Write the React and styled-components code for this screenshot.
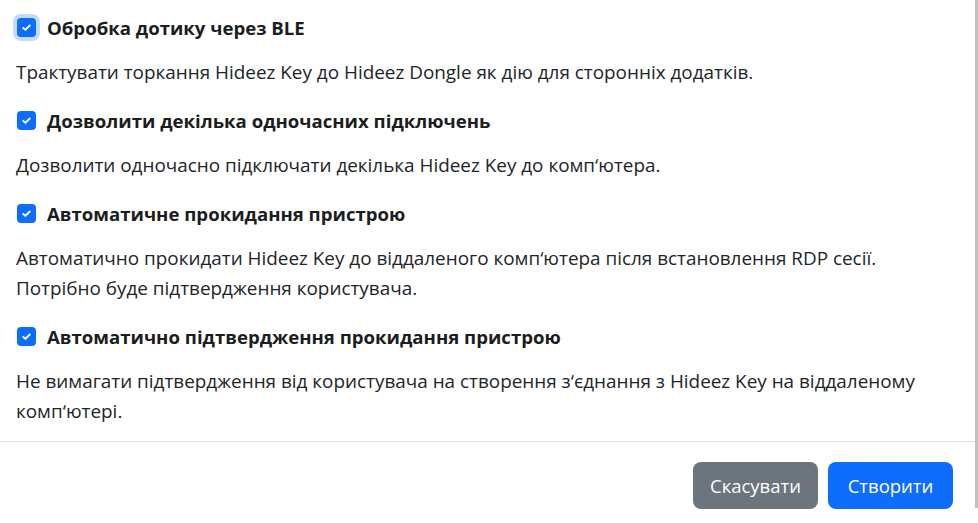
import React from 'react'
import styled, { createGlobalStyle } from 'styled-components'

const GlobalStyle = createGlobalStyle`
  html, body {
    margin: 0;
    padding: 0;
    background: #fff;
  }
  body {
    font-family: "Open Sans", "Noto Sans", sans-serif;
    color: #212529;
  }
`

const Frame = styled.div`
  display: flex;
  width: 978px;
  height: 523px;
  overflow: hidden;
`

const Modal = styled.div`
  flex: 1;
  display: flex;
  flex-direction: column;
`

const Scrollbar = styled.div`
  width: 3px;
  height: 508px;
  background: #c1c1c1;
`

const Body = styled.div`
  padding: 14px 16px 15px 16px;
  display: flex;
  flex-direction: column;
`

const Option = styled.div`
  display: flex;
  flex-direction: column;
  gap: 16px;
  margin-bottom: ${p => (p.last ? '0' : '20px')};
`

const Label = styled.label`
  display: flex;
  align-items: center;
  gap: 11px;
  height: 27px;
  font-size: 18.6px;
  font-weight: 700;
  color: #1b1d20;
`

const Box = styled.span`
  width: 19px;
  height: 19px;
  margin-left: 1px;
  border-radius: 4px;
  background: #0d6efd;
  display: flex;
  align-items: center;
  justify-content: center;
  box-shadow: ${p => (p.focused ? '0 0 0 4px rgba(13, 110, 253, 0.25)' : 'none')};
`

const Description = styled.p`
  margin: 0;
  font-size: 18.9px;
  line-height: 30px;
  color: #212529;
`

const Footer = styled.div`
  border-top: 1px solid #dee2e6;
  display: flex;
  justify-content: flex-end;
  gap: 10px;
  padding: 20px 22px 12px 0;
`

const Button = styled.button`
  height: 47px;
  width: 125px;
  border: none;
  border-radius: 8px;
  font-family: inherit;
  font-size: 18.5px;
  color: #fff;
  background: ${p => (p.primary ? '#0d6efd' : '#6c757d')};
`

const options = [
  {
    title: 'Обробка дотику через BLE',
    text: 'Трактувати торкання Hideez Key до Hideez Dongle як дію для сторонніх додатків.',
    focused: true,
  },
  {
    title: 'Дозволити декілька одночасних підключень',
    text: 'Дозволити одночасно підключати декілька Hideez Key до комп‘ютера.',
  },
  {
    title: 'Автоматичне прокидання пристрою',
    text: 'Автоматично прокидати Hideez Key до віддаленого комп‘ютера після встановлення RDP сесії. Потрібно буде підтвердження користувача.',
  },
  {
    title: 'Автоматично підтвердження прокидання пристрою',
    text: 'Не вимагати підтвердження від користувача на створення з‘єднання з Hideez Key на віддаленому комп‘ютері.',
  },
]

function Check({ focused }) {
  return (
    <Box focused={focused}>
      <svg width="13" height="13" viewBox="0 0 20 20">
        <path d="M5 10.5l3.2 3.2L15 7" fill="none" stroke="#fff" strokeWidth="3" strokeLinecap="round" strokeLinejoin="round" />
      </svg>
    </Box>
  )
}

export default function App() {
  return (
    <Frame>
      <GlobalStyle />
      <Modal>
        <Body>
          {options.map((o, i) => (
            <Option key={i} last={i === options.length - 1}>
              <Label>
                <Check focused={o.focused} />
                {o.title}
              </Label>
              <Description>{o.text}</Description>
            </Option>
          ))}
        </Body>
        <Footer>
          <Button>Скасувати</Button>
          <Button primary>Створити</Button>
        </Footer>
      </Modal>
      <Scrollbar />
    </Frame>
  )
}
